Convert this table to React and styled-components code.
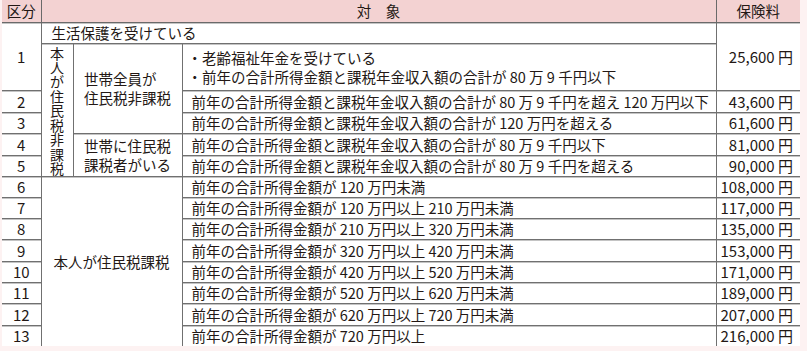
import React from "react";
import styled, { createGlobalStyle } from "styled-components";

const GlobalStyle = createGlobalStyle`
  html, body { margin: 0; padding: 0; background: #fdf2f2; }
  body { font-family: "Noto Sans CJK JP", sans-serif; color: #231815; }
`;

const Wrap = styled.div`
  padding: 0 7px 5px 2px;
`;

const Table = styled.table`
  border-collapse: collapse;
  border-style: hidden;
  table-layout: fixed;
  width: 798px;
  background: #fff;
  font-size: 14.5px;
  line-height: 19px;
`;

const Row = styled.tr`
  height: ${(p) => p.$h}px;
`;

const Th = styled.th`
  background: #f3d2d2;
  font-weight: normal;
  padding: 0;
  text-align: center;
  border: 1px solid #6a6a6a;
`;

const Td = styled.td`
  border: 1px solid #707070;
  box-shadow: inset 0 1px 0 #c4c4c4;
  padding: 0 ${(p) => p.$pr || 0}px 0 ${(p) => p.$pl || 0}px;
  text-align: ${(p) => p.$align || "left"};
  vertical-align: middle;
  white-space: nowrap;
  overflow: hidden;
`;

const Num = styled(Td)`
  text-align: center;
  font-size: 15px;
`;

const Fee = styled(Td)`
  text-align: right;
  padding-right: 7px;
  font-size: 15px;
`;

const Vertical = styled.div`
  display: flex;
  flex-direction: column;
  align-items: center;
  line-height: 14.4px;
  font-size: 14px;
  padding-top: 2px;
`;

const Group = styled.div`
  display: inline-block;
  text-align: left;
  line-height: 19px;
`;

const Bullets = styled.div`
  margin-left: -4px;
  line-height: 19px;
`;

const feeRows = [
  ["2", "前年の合計所得金額と課税年金収入額の合計が 80 万 9 千円を超え 120 万円以下", "43,600"],
  ["3", "前年の合計所得金額と課税年金収入額の合計が 120 万円を超える", "61,600"],
  ["4", "前年の合計所得金額と課税年金収入額の合計が 80 万 9 千円以下", "81,000"],
  ["5", "前年の合計所得金額と課税年金収入額の合計が 80 万 9 千円を超える", "90,000"],
  ["6", "前年の合計所得金額が 120 万円未満", "108,000"],
  ["7", "前年の合計所得金額が 120 万円以上 210 万円未満", "117,000"],
  ["8", "前年の合計所得金額が 210 万円以上 320 万円未満", "135,000"],
  ["9", "前年の合計所得金額が 320 万円以上 420 万円未満", "153,000"],
  ["10", "前年の合計所得金額が 420 万円以上 520 万円未満", "171,000"],
  ["11", "前年の合計所得金額が 520 万円以上 620 万円未満", "189,000"],
  ["12", "前年の合計所得金額が 620 万円以上 720 万円未満", "207,000"],
  ["13", "前年の合計所得金額が 720 万円以上", "216,000"],
];

const heights = [22, 21, 22, 21, 21, 21, 21, 22, 21, 21, 22, 21];

export default function App() {
  return (
    <Wrap>
      <GlobalStyle />
      <Table>
        <colgroup>
          <col style={{ width: 39 }} />
          <col style={{ width: 32 }} />
          <col style={{ width: 109 }} />
          <col style={{ width: 534 }} />
          <col style={{ width: 84 }} />
        </colgroup>
        <tbody>
          <Row $h={22}>
            <Th>区分</Th>
            <Th colSpan={3}>対　象</Th>
            <Th>保険料</Th>
          </Row>
          <Row $h={21}>
            <Num rowSpan={2}>1</Num>
            <Td colSpan={3} $pl={10}>生活保護を受けている</Td>
            <Fee rowSpan={2}>25,600 円</Fee>
          </Row>
          <Row $h={47}>
            <Td rowSpan={5} $align="center">
              <Vertical>
                {"本人が住民税非課税".split("").map((c, i) => (
                  <span key={i}>{c}</span>
                ))}
              </Vertical>
            </Td>
            <Td rowSpan={3} $align="center">
              <Group>
                世帯全員が
                <br />
                住民税非課税
              </Group>
            </Td>
            <Td $pl={9}>
              <Bullets>
                ・老齢福祉年金を受けている
                <br />
                ・前年の合計所得金額と課税年金収入額の合計が 80 万 9 千円以下
              </Bullets>
            </Td>
          </Row>
          {feeRows.map(([n, text, fee], i) => (
            <Row key={n} $h={heights[i]}>
              <Num>{n}</Num>
              {n === "4" && (
                <Td rowSpan={2} $align="center">
                  <Group>
                    世帯に住民税
                    <br />
                    課税者がいる
                  </Group>
                </Td>
              )}
              {n === "6" && (
                <Td rowSpan={8} colSpan={2} $align="center">
                  本人が住民税課税
                </Td>
              )}
              <Td $pl={9}>{text}</Td>
              <Fee>{fee} 円</Fee>
            </Row>
          ))}
        </tbody>
      </Table>
    </Wrap>
  );
}
